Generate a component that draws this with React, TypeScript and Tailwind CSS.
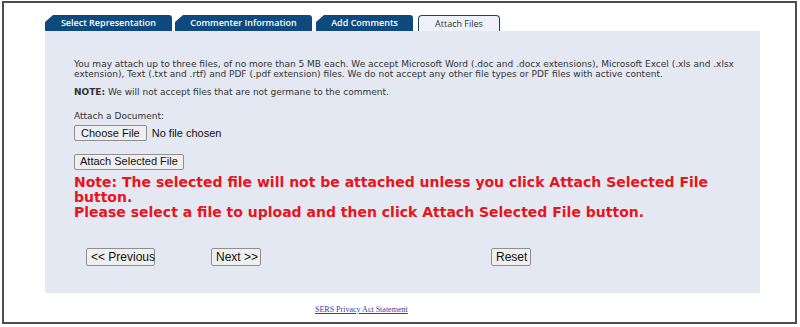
const tabs = [
  { label: "Select Representation", w: "w-[127px]", mr: "mr-[3px]" },
  { label: "Commenter Information", w: "w-[137px]", mr: "mr-[4px]" },
  { label: "Add Comments", w: "w-[97px]", mr: "mr-[5px]" },
];

function Btn({ children, className = "" }: { children: React.ReactNode; className?: string }) {
  return (
    <button
      className={`border border-[#8f8f8f] bg-[#efefef] rounded-[2px] text-[#111] whitespace-nowrap font-['Liberation_Sans',Arial,sans-serif] leading-none ${className}`}
    >
      {children}
    </button>
  );
}

export default function App() {
  return (
    <div className="min-h-[327px] bg-white pt-[1px] pl-[2px]">
      <div className="w-[795px] h-[323px] border-2 border-[#4d4d4d] pt-[12px] pl-[41px] font-['DejaVu_Sans',Verdana,sans-serif]">
        {/* tabs */}
        <div className="flex items-end h-[16px]">
          {tabs.map((t) => (
            <div
              key={t.label}
              className={`${t.w} ${t.mr} h-[16px] bg-[#0e4a7d] text-white text-[9px] font-semibold font-['Open_Sans',sans-serif] flex items-center justify-center rounded-tr-[3px] [clip-path:polygon(8px_0,100%_0,100%_100%,0_100%,0_7px)]`}
            >
              {t.label}
            </div>
          ))}
          <div className="w-[82px] h-[16px] border border-b-0 border-[#243f5e] rounded-t-[4px] bg-[#eef1f7] text-[#333] text-[9px] font-['Open_Sans',sans-serif] flex items-center justify-center">
            Attach Files
          </div>
        </div>

        {/* panel */}
        <div className="w-[715px] h-[262px] bg-[#e3e8f2] pt-[28px] pl-[29px] text-[#333]">
          <p className="w-[665px] text-[9px] leading-[10px]">
            You may attach up to three files, of no more than 5 MB each. We accept Microsoft Word (.doc and .docx
            extensions), Microsoft Excel (.xls and .xlsx extension), Text (.txt and .rtf) and PDF (.pdf extension)
            files. We do not accept any other file types or PDF files with active content.
          </p>
          <p className="mt-[8px] text-[9px] leading-[10px]">
            <span className="font-bold">NOTE:</span> We will not accept files that are not germane to the comment.
          </p>
          <p className="mt-[14px] text-[9px] leading-[10px]">Attach a Document:</p>
          <div className="mt-[4px] flex items-center gap-[5px]">
            <Btn className="h-[16px] px-[6px] text-[11px]">Choose File</Btn>
            <span className="text-[11px] text-[#111] font-['Liberation_Sans',Arial,sans-serif]">No file chosen</span>
          </div>
          <Btn className="mt-[12px] h-[16px] px-[5px] text-[11px]">Attach Selected File</Btn>
          <div className="mt-[3px] w-[660px] text-[14px] leading-[15px] font-bold text-[#e8141b]">
            <p>Note: The selected file will not be attached unless you click Attach Selected File button.</p>
            <p>Please select a file to upload and then click Attach Selected File button.</p>
          </div>
          <div className="mt-[28px] pl-[12px] flex items-center">
            <Btn className="h-[18px] px-[4px] text-[12px] w-[69px]">&lt;&lt; Previous</Btn>
            <Btn className="ml-[56px] h-[18px] px-[4px] text-[12px] w-[50px]">Next &gt;&gt;</Btn>
            <Btn className="ml-[230px] h-[18px] px-[4px] text-[12px] w-[40px]">Reset</Btn>
          </div>
        </div>

        {/* footer */}
        <div className="pl-[270px] pt-[12px] text-[8px] leading-[10px]">
          <a href="#" className="text-[#3a3aa8] underline font-['Liberation_Serif','Times_New_Roman',serif]">
            SERS Privacy Act Statement
          </a>
        </div>
      </div>
    </div>
  );
}
